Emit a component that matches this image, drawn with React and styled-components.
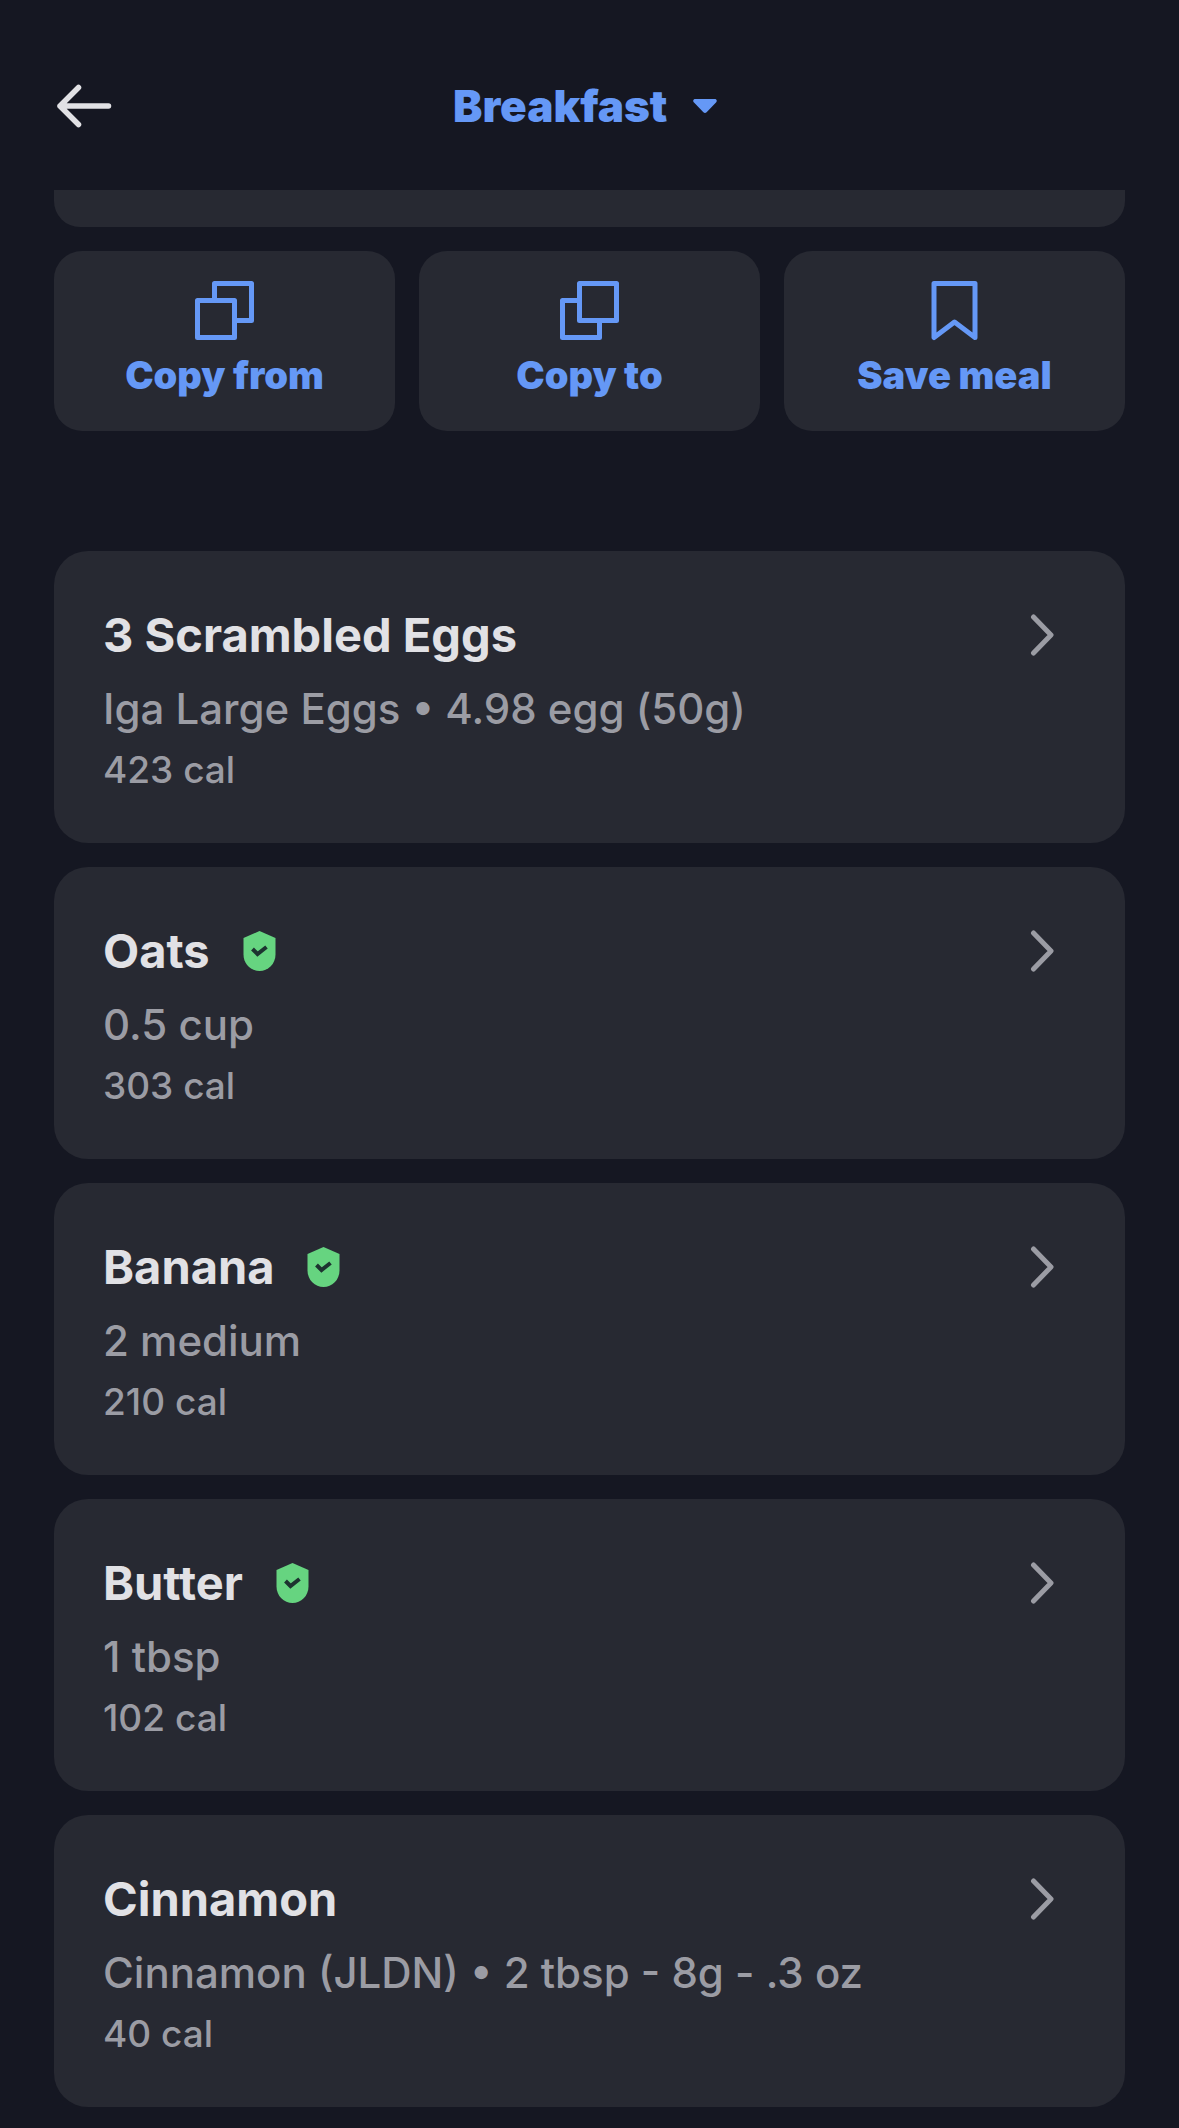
import React, { useState } from 'react'
import styled, { createGlobalStyle } from 'styled-components'

const GlobalStyle = createGlobalStyle`
  * { box-sizing: border-box; }
  body {
    margin: 0;
    background-color: #151722;
    color: #e1e1e5;
    font-family: Inter, "Liberation Sans", sans-serif;
  }
`

const Header = styled.header`
  display: grid;
  grid-template-columns: 60px 1fr 60px;
  align-items: center;
  height: 190px;
  padding: 22px 54px 0;
`

const BackButton = styled.button`
  display: flex;
  padding: 0;
  border: 0;
  background: none;
  color: inherit;
  cursor: pointer;
`

const MealPicker = styled.label`
  display: flex;
  align-items: center;
  justify-content: center;
  gap: 16px;
  color: #6598f6;
`

const MealSelect = styled.select`
  appearance: none;
  padding: 0;
  border: 0;
  background: none;
  color: inherit;
  font-family: inherit;
  font-size: 44px;
  font-weight: 900;
  line-height: 56px;
  cursor: pointer;
`

const Main = styled.main`
  padding: 0 54px 21px;
`

// bottom edge of the summary card scrolled under the header
const SummaryEdge = styled.div`
  height: 37px;
  margin-bottom: 24px;
  border-radius: 0 0 26px 26px;
  background-color: #272932;
`

const Actions = styled.div`
  display: grid;
  grid-template-columns: repeat(3, 1fr);
  gap: 24px;
  margin-bottom: 120px;
`

const ActionButton = styled.button`
  display: flex;
  flex-direction: column;
  align-items: center;
  gap: 10px;
  padding: 30px 0 32px;
  border: 0;
  border-radius: 28px;
  background-color: #272932;
  color: #6598f6;
  font-family: inherit;
  font-size: 38px;
  font-weight: 900;
  line-height: 48px;
  cursor: pointer;
`

const FoodList = styled.ul`
  display: flex;
  flex-direction: column;
  gap: 24px;
  margin: 0;
  padding: 0;
  list-style: none;
`

const FoodCard = styled.a`
  display: block;
  padding: 54px 71px 48px 49px;
  border-radius: 34px;
  background-color: #272932;
  color: #9b9ca4;
  font-weight: 500;
  text-decoration: none;
`

const FoodHead = styled.div`
  display: flex;
  align-items: center;
  gap: 33px;
  margin-bottom: 16px;
`

const FoodName = styled.h2`
  margin: 0;
  color: #e1e1e5;
  font-size: 47px;
  font-weight: 700;
  line-height: 60px;
`

const FoodAmount = styled.p`
  margin: 0 0 8px;
  font-size: 42px;
  line-height: 56px;
`

const FoodCalories = styled.p`
  margin: 0;
  font-size: 37px;
  line-height: 50px;
`

const ChevronIcon = styled.svg`
  flex: none;
  margin-left: auto;
`

const Stroke = ({ children, width = 59, height = 60 }) => (
  <svg width={width} height={height} viewBox={`0 0 ${width} ${height}`} fill="none" stroke="currentColor"
    strokeWidth="5" strokeLinecap="round" strokeLinejoin="round" aria-hidden="true">
    {children}
  </svg>
)

const ArrowLeft = () => (
  <Stroke width={60} height={44}>
    <path d="M6 22H54.500M24.500 3.500L6 22L24.500 40.500" strokeWidth="5.500" />
  </Stroke>
)

const CopyFromIcon = () => (
  <Stroke>
    <rect x="2.500" y="19.500" width="37" height="37" />
    <path d="M19.500 19.500V2.500H56.500V39.500H39.500" />
  </Stroke>
)

const CopyToIcon = () => (
  <Stroke>
    <rect x="19.500" y="2.500" width="37" height="37" />
    <path d="M19.500 19.500H2.500V56.500H39.500V39.500" />
  </Stroke>
)

const BookmarkIcon = () => (
  <Stroke>
    <path d="M9 2.500H50V56.500L29.500 41L9 56.500Z" />
  </Stroke>
)

const Caret = () => (
  <svg width="42" height="42" viewBox="0 0 42 42" fill="currentColor" aria-hidden="true">
    <path d="M11.500 14H30.500C32.800 14 33.500 16 32 17.500L22.600 27.300Q21 28.600 19.400 27.300L10 17.500C8.500 16 9.200 14 11.500 14Z" />
  </svg>
)

const VerifiedBadge = () => (
  <svg width="33" height="40" viewBox="0 0 33 40" role="img" aria-label="Verified">
    <path d="M16.500 0L32.500 7V23.500C32.500 33 25 40 16.500 40S0.500 33 0.500 23.500V7Z" fill="#66d480" />
    <path d="M9.500 18L14.500 23L23.500 16" fill="none" stroke="#1d3330" strokeWidth="4" />
  </svg>
)

const Chevron = () => (
  <ChevronIcon width="24" height="44" viewBox="0 0 24 44" fill="none" stroke="currentColor"
    strokeWidth="5" strokeLinecap="round" strokeLinejoin="round" aria-hidden="true">
    <path d="M3.500 4L21 22L3.500 40" />
  </ChevronIcon>
)

const meals = ['Breakfast', 'Lunch', 'Dinner', 'Snacks']

const actions = [
  { label: 'Copy from', Icon: CopyFromIcon },
  { label: 'Copy to', Icon: CopyToIcon },
  { label: 'Save meal', Icon: BookmarkIcon },
]

const foods = [
  { name: '3 Scrambled Eggs', amount: 'Iga Large Eggs • 4.98 egg (50g)', calories: 423 },
  { name: 'Oats', amount: '0.5 cup', calories: 303, verified: true },
  { name: 'Banana', amount: '2 medium', calories: 210, verified: true },
  { name: 'Butter', amount: '1 tbsp', calories: 102, verified: true },
  { name: 'Cinnamon', amount: 'Cinnamon (JLDN) • 2 tbsp - 8g - .3 oz', calories: 40 },
]

function App() {
  const [meal, setMeal] = useState('Breakfast')

  return (
    <>
      <GlobalStyle />
      <Header>
        <BackButton type="button" aria-label="Back"><ArrowLeft /></BackButton>
        <MealPicker>
          <MealSelect aria-label="Meal" value={meal} onChange={(e) => setMeal(e.target.value)}>
            {meals.map((m) => <option key={m}>{m}</option>)}
          </MealSelect>
          <Caret />
        </MealPicker>
      </Header>
      <Main>
        <SummaryEdge />
        <Actions>
          {actions.map(({ label, Icon }) => (
            <ActionButton key={label} type="button">
              <Icon />
              {label}
            </ActionButton>
          ))}
        </Actions>
        <FoodList>
          {foods.map((food) => (
            <li key={food.name}>
              <FoodCard href="#">
                <FoodHead>
                  <FoodName>{food.name}</FoodName>
                  {food.verified && <VerifiedBadge />}
                  <Chevron />
                </FoodHead>
                <FoodAmount>{food.amount}</FoodAmount>
                <FoodCalories>{food.calories} cal</FoodCalories>
              </FoodCard>
            </li>
          ))}
        </FoodList>
      </Main>
    </>
  )
}

export default App
